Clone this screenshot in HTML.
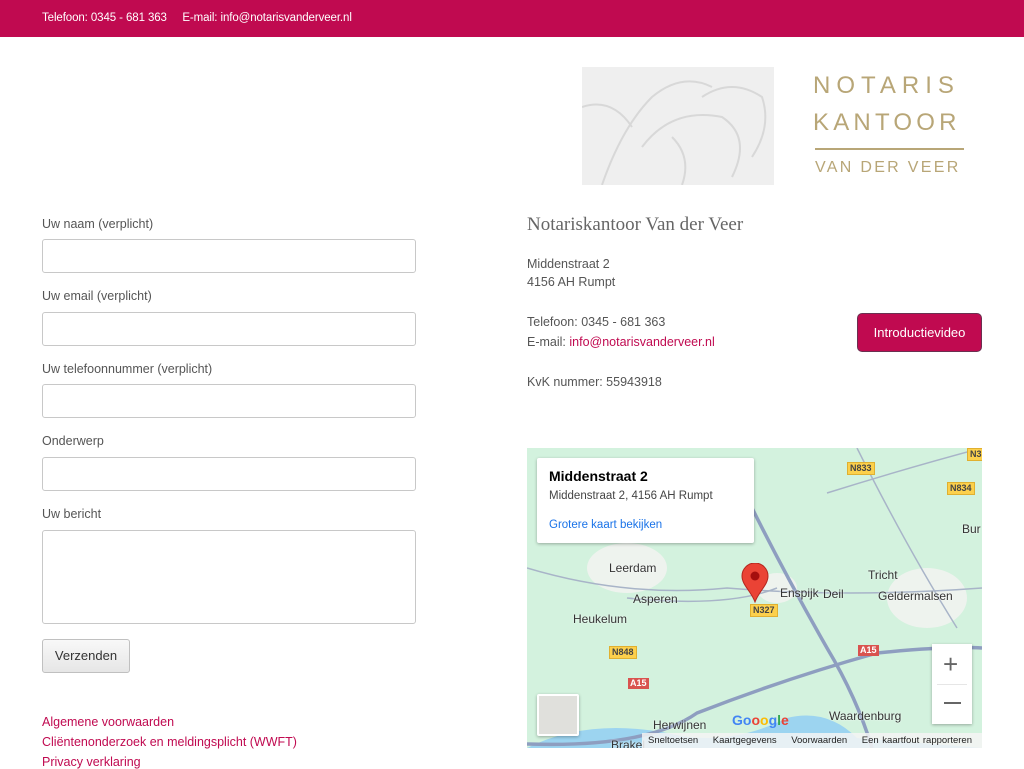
<!DOCTYPE html>
<html><head><meta charset="utf-8"><style>
*{margin:0;padding:0;box-sizing:border-box}
body{width:1024px;height:768px;overflow:hidden;background:#fff;font-family:"Liberation Sans",sans-serif;color:#555;font-size:13px;position:relative}
.top{position:absolute;left:0;top:0;width:1024px;height:37px;background:#c00a50;color:#fff;font-size:11.5px;line-height:37px;padding-left:42px;letter-spacing:-0.1px}
.abs{position:absolute}
.lbl{position:absolute;left:42px;font-size:12.5px;color:#555}
.inp{position:absolute;left:42px;width:374px;height:34px;border:1px solid #c8c8c8;border-radius:3px;background:#fff}
.btn{position:absolute;left:42px;top:639px;width:88px;height:34px;border:1px solid #c0c0c0;border-radius:3px;background:linear-gradient(#f8f8f8,#e6e6e6);font-size:13px;color:#333;text-align:center;line-height:32px}
.lnk{position:absolute;left:42px;color:#c00a50;font-size:12.5px}
.r{position:absolute;left:527px;font-size:12.5px;color:#555}
.logo{color:#b8a677;font-family:"Liberation Sans",sans-serif;position:absolute}
.road{position:absolute;font-size:9px;padding:0 2px;line-height:11px;font-weight:bold}
.y{background:#fcd04c;color:#444;border:1px solid #e0b030}
.rd{background:#d9534f;color:#fff}
.town{position:absolute;font-size:12px;color:#333;text-shadow:0 0 2px #fff}
</style></head><body>
<div class="top">Telefoon: 0345 - 681 363&nbsp;&nbsp;&nbsp;&nbsp; E-mail: info@notarisvanderveer.nl</div>

<div class="abs" style="left:582px;top:67px;width:192px;height:118px;background:#efefef;overflow:hidden">
<svg width="192" height="118"><g fill="none" stroke="#d8d8d8" stroke-width="2"><path d="M20 118 Q40 60 70 30 Q100 5 130 20"/><path d="M60 80 Q90 40 140 50 Q170 70 150 110"/><path d="M120 30 Q150 10 180 30 Q190 60 170 90"/><path d="M0 40 Q30 30 50 60"/><path d="M90 70 Q110 90 100 118"/></g></svg>
</div>
<div class="logo" style="left:813px;top:72px;font-size:24px;letter-spacing:6px">NOTARIS</div>
<div class="logo" style="left:813px;top:109px;font-size:24px;letter-spacing:4.2px">KANTOOR</div>
<div class="abs" style="left:815px;top:148px;width:149px;height:2px;background:#b8a677"></div>
<div class="logo" style="left:815px;top:159px;font-size:16px;letter-spacing:2.3px">VAN DER VEER</div>

<div class="lbl" style="top:217px">Uw naam (verplicht)</div>
<div class="inp" style="top:239px"></div>
<div class="lbl" style="top:289px">Uw email (verplicht)</div>
<div class="inp" style="top:312px"></div>
<div class="lbl" style="top:362px">Uw telefoonnummer (verplicht)</div>
<div class="inp" style="top:384px"></div>
<div class="lbl" style="top:434px">Onderwerp</div>
<div class="inp" style="top:457px"></div>
<div class="lbl" style="top:507px">Uw bericht</div>
<div class="inp" style="top:530px;height:94px"></div>
<div class="btn">Verzenden</div>
<div class="lnk" style="top:715px">Algemene voorwaarden</div>
<div class="lnk" style="top:735px">Cliëntenonderzoek en meldingsplicht (WWFT)</div>
<div class="lnk" style="top:755px">Privacy verklaring</div>

<div class="r" style="top:214px;font-family:'Liberation Serif',serif;font-size:19px;color:#666">Notariskantoor Van der Veer</div>
<div class="r" style="top:257px">Middenstraat 2</div>
<div class="r" style="top:275px">4156 AH Rumpt</div>
<div class="r" style="top:315px">Telefoon: 0345 - 681 363</div>
<div class="r" style="top:335px">E-mail: <span style="color:#c00a50">info@notarisvanderveer.nl</span></div>
<div class="r" style="top:375px">KvK nummer: 55943918</div>
<div class="abs" style="left:857px;top:313px;width:125px;height:39px;background:#c00a50;border:1px solid #6a3050;border-radius:5px;color:#fff;font-size:13px;text-align:center;line-height:37px">Introductievideo</div>

<div class="abs" style="left:527px;top:448px;width:455px;height:300px;background:#d3f2de;overflow:hidden">
<svg width="455" height="300" style="position:absolute;left:0;top:0">
<path d="M0 300 Q60 270 140 285 Q200 300 260 270 Q300 260 330 290 L455 300Z" fill="#9cd4f0"/>
<g fill="#eef3ee"><ellipse cx="100" cy="120" rx="40" ry="25"/><ellipse cx="400" cy="150" rx="40" ry="30"/><ellipse cx="250" cy="140" rx="20" ry="15"/></g>
<g fill="none" stroke="#8e9ec0" stroke-width="3.5"><path d="M225 60 Q260 130 300 200 Q330 250 345 300"/><path d="M0 296 Q120 300 170 265 Q260 230 350 205 Q420 198 455 200"/></g>
<g fill="none" stroke="#a8b4c8" stroke-width="1.5"><path d="M0 120 Q100 150 200 140 Q320 150 455 140"/><path d="M100 150 Q200 160 250 140"/><path d="M300 45 Q380 20 455 0"/><path d="M330 0 Q380 100 430 180"/></g>
</svg>
<div class="abs" style="left:10px;top:10px;width:217px;height:85px;background:#fff;border-radius:2px;box-shadow:0 1px 3px rgba(0,0,0,.3)"></div>
<div class="abs" style="left:22px;top:20px;font-size:14px;font-weight:bold;color:#000">Middenstraat 2</div>
<div class="abs" style="left:22px;top:42px;font-size:11.5px;color:#444">Middenstraat 2, 4156 AH Rumpt</div>
<div class="abs" style="left:22px;top:71px;font-size:11.5px;color:#1a73e8">Grotere kaart bekijken</div>
<div class="road y" style="left:320px;top:14px">N833</div>
<div class="road y" style="left:420px;top:34px">N834</div>
<div class="road y" style="left:440px;top:0px">N3</div>
<div class="road y" style="left:223px;top:156px">N327</div>
<div class="road y" style="left:82px;top:198px">N848</div>
<div class="road rd" style="left:331px;top:197px">A15</div>
<div class="road rd" style="left:101px;top:230px">A15</div>
<div class="town" style="left:82px;top:113px">Leerdam</div>
<div class="town" style="left:106px;top:144px">Asperen</div>
<div class="town" style="left:46px;top:164px">Heukelum</div>
<div class="town" style="left:253px;top:138px">Enspijk</div>
<div class="town" style="left:296px;top:139px">Deil</div>
<div class="town" style="left:341px;top:120px">Tricht</div>
<div class="town" style="left:351px;top:141px">Geldermalsen</div>
<div class="town" style="left:302px;top:261px">Waardenburg</div>
<div class="town" style="left:126px;top:270px">Herwijnen</div>
<div class="town" style="left:84px;top:290px">Brakel</div>
<div class="town" style="left:435px;top:74px">Bur</div>
<svg class="abs" style="left:214px;top:115px" width="28" height="40"><path d="M14 39 C10 28 1 22 1 13 A13 13 0 0 1 27 13 C27 22 18 28 14 39Z" fill="#ea4335" stroke="#b3261e"/><circle cx="14" cy="13" r="4.5" fill="#a50e0e"/></svg>
<div class="abs" style="left:405px;top:196px;width:40px;height:80px;background:#fff;box-shadow:0 1px 3px rgba(0,0,0,.3)"></div>
<div class="abs" style="left:416px;top:203px;font-size:26px;color:#666;line-height:26px">+</div>
<div class="abs" style="left:410px;top:236px;width:30px;height:1px;background:#e6e6e6"></div>
<div class="abs" style="left:417px;top:254px;width:17px;height:2px;background:#666"></div>
<div class="abs" style="left:10px;top:246px;width:42px;height:42px;background:#e0e0dc;border:2px solid #fff;border-radius:2px;box-shadow:0 1px 3px rgba(0,0,0,.3)"></div>
<div class="abs" style="left:205px;top:264px;font-size:14px;font-weight:bold;color:#4285f4">Go<span style="color:#ea4335">o</span><span style="color:#fbbc05">o</span>g<span style="color:#34a853">l</span><span style="color:#ea4335">e</span></div>
<div class="abs" style="left:115px;top:285px;width:340px;height:15px;background:rgba(245,245,245,.85);font-size:9.5px;color:#222;line-height:15px;padding-left:6px;word-spacing:1px">Sneltoetsen&nbsp;&nbsp;&nbsp; Kaartgegevens&nbsp;&nbsp;&nbsp; Voorwaarden&nbsp;&nbsp;&nbsp; Een kaartfout rapporteren</div>
</div>
</body></html>
